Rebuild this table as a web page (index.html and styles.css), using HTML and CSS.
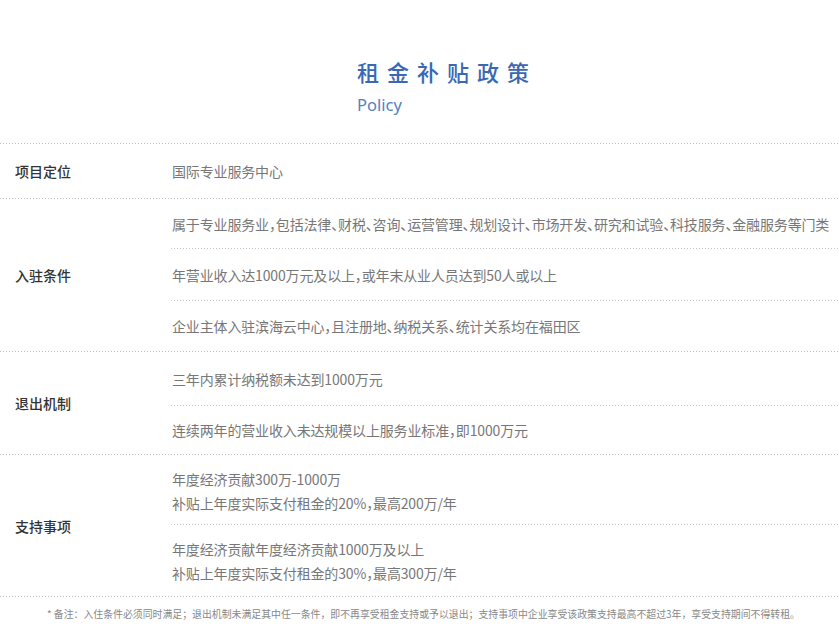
FILE: index.html
```html
<!DOCTYPE html>
<html lang="zh-CN">
<head>
<meta charset="utf-8">
<title>租金补贴政策</title>
<link rel="stylesheet" href="styles.css">
</head>
<body>
<div class="page">
  <header class="header">
    <h1 class="title">租金补贴政策</h1>
    <div class="subtitle">Policy</div>
  </header>

  <div class="table">
    <div class="row">
      <div class="label">项目定位</div>
      <div class="values">
        <div class="item item-first">国际专业服务中心</div>
      </div>
    </div>

    <div class="row">
      <div class="label">入驻条件</div>
      <div class="values">
        <div class="item">属于专业服务业，包括法律、财税、咨询、运营管理、规划设计、市场开发、研究和试验、科技服务、金融服务等门类</div>
        <div class="item item-loose">年营业收入达1000万元及以上，或年末从业人员达到50人或以上</div>
        <div class="item">企业主体入驻滨海云中心，且注册地、纳税关系、统计关系均在福田区</div>
      </div>
    </div>

    <div class="row">
      <div class="label">退出机制</div>
      <div class="values">
        <div class="item item-tall">三年内累计纳税额未达到1000万元</div>
        <div class="item item-short">连续两年的营业收入未达规模以上服务业标准，即1000万元</div>
      </div>
    </div>

    <div class="row">
      <div class="label">支持事项</div>
      <div class="values">
        <div class="item item-double">年度经济贡献300万-1000万<br>补贴上年度实际支付租金的20%，最高200万/年</div>
        <div class="item item-double item-end">年度经济贡献年度经济贡献1000万及以上<br>补贴上年度实际支付租金的30%，最高300万/年</div>
      </div>
    </div>
  </div>

  <p class="note">* 备注：入住条件必须同时满足；退出机制未满足其中任一条件，即不再享受租金支持或予以退出；支持事项中企业享受该政策支持最高不超过3年，享受支持期间不得转租。</p>
</div>
</body>
</html>
```

FILE: styles.css
```css
* {
  box-sizing: border-box;
}

html, body {
  margin: 0;
  padding: 0;
  background: #ffffff;
}

body {
  font-family: "Noto Sans CJK SC", "Noto Sans", sans-serif;
  color: #333333;
}

.page {
  width: 839px;
}

.header {
  padding: 56px 0 0 357px;
  margin-bottom: 26px;
}

.title {
  margin: 0;
  font-size: 22px;
  line-height: 30px;
  font-weight: 500;
  letter-spacing: 8px;
  color: #3a68b4;
}

.subtitle {
  margin-top: 7px;
  font-family: "Noto Sans", sans-serif;
  font-size: 16.5px;
  line-height: 24px;
  font-weight: 400;
  color: #5580c2;
}

.table {
  background-image: linear-gradient(to right, #bdbdbd 1px, transparent 1px);
  background-size: 3px 1px;
  background-repeat: repeat-x;
  background-position: left top;
  padding-top: 1px;
}

.row {
  display: grid;
  grid-template-columns: 171px 1fr;
  background-image: linear-gradient(to right, #bdbdbd 1px, transparent 1px);
  background-size: 3px 1px;
  background-repeat: repeat-x;
  background-position: left bottom;
  padding-bottom: 1px;
}

.label {
  display: flex;
  align-items: center;
  padding-left: 15px;
  font-size: 14px;
  font-weight: 500;
  color: #333333;
}

.values {
  display: flex;
  flex-direction: column;
}

.item {
  padding: 13px 0 13px 1px;
  font-size: 14px;
  line-height: 24px;
  letter-spacing: -0.15px;
  color: #777777;
  white-space: nowrap;
  font-feature-settings: "halt";
  background-image: linear-gradient(to right, #c4c4c4 1px, transparent 1px);
  background-size: 3px 1px;
  background-repeat: repeat-x;
  background-position: left bottom;
}

.item:last-child {
  background-image: none;
}

.item-first {
  padding-top: 15px;
  padding-bottom: 15px;
}

.item-loose {
  padding-top: 14px;
  padding-bottom: 14px;
}

.item-tall {
  padding-top: 15px;
  padding-bottom: 15px;
}

.item-short {
  padding-top: 12px;
  padding-bottom: 12px;
}

.item-double {
  padding-top: 12px;
  padding-bottom: 10px;
}

.item-end {
  padding-bottom: 11px;
}

.note {
  margin: 0;
  padding: 9px 0 0 8px;
  text-align: center;
  font-size: 9.9px;
  line-height: 16px;
  color: #888888;
  white-space: nowrap;
}
```
